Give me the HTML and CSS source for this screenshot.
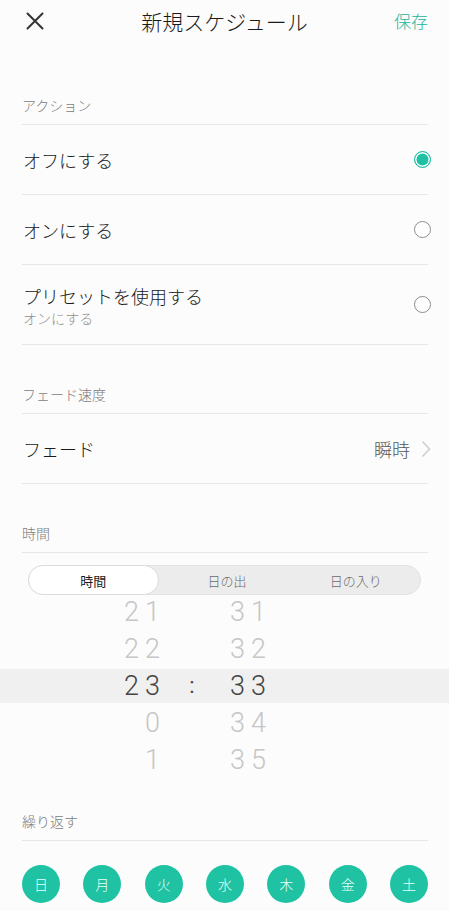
FILE: index.html
```html
<!DOCTYPE html>
<html lang="ja">
<head>
<meta charset="utf-8">
<link rel="stylesheet" href="styles.css">
</head>
<body>
<div class="page">
  <header class="topbar">
    <div class="tb-left">
      <svg class="close" width="18" height="18" viewBox="0 0 18 18"><path d="M1.5 1.5 L16.5 16.5 M16.5 1.5 L1.5 16.5" stroke="#333" stroke-width="2" stroke-linecap="round" fill="none"/></svg>
    </div>
    <div class="tb-title">新規スケジュール</div>
    <div class="tb-right">保存</div>
  </header>

  <div class="sec-head first"><span>アクション</span></div>
  <div class="row"><span class="row-text">オフにする</span><span class="radio on"></span></div>
  <div class="row"><span class="row-text">オンにする</span><span class="radio"></span></div>
  <div class="row tall">
    <div class="row-stack"><span class="row-text">プリセットを使用する</span><span class="row-sub">オンにする</span></div>
    <span class="radio"></span>
  </div>

  <div class="sec-head"><span>フェード速度</span></div>
  <div class="row">
    <span class="row-text">フェード</span>
    <span class="row-value">瞬時<svg class="chev" width="10" height="18" viewBox="0 0 10 18"><path d="M1.5 1.5 L8.5 9 L1.5 16.5" stroke="#cfcfcf" stroke-width="1.6" fill="none"/></svg></span>
  </div>

  <div class="sec-head"><span>時間</span></div>
  <div class="segment">
    <div class="seg-item active">時間</div>
    <div class="seg-item">日の出</div>
    <div class="seg-item">日の入り</div>
  </div>

  <div class="picker">
    <div class="p-row"><span class="p-h">21</span><span class="p-c"></span><span class="p-m">31</span></div>
    <div class="p-row"><span class="p-h">22</span><span class="p-c"></span><span class="p-m">32</span></div>
    <div class="p-row sel"><span class="p-h">23</span><span class="p-c">:</span><span class="p-m">33</span></div>
    <div class="p-row"><span class="p-h">0</span><span class="p-c"></span><span class="p-m">34</span></div>
    <div class="p-row"><span class="p-h">1</span><span class="p-c"></span><span class="p-m">35</span></div>
  </div>

  <div class="sec-head repeat"><span>繰り返す</span></div>
  <div class="days">
    <span class="day">日</span>
    <span class="day">月</span>
    <span class="day">火</span>
    <span class="day">水</span>
    <span class="day">木</span>
    <span class="day">金</span>
    <span class="day">土</span>
  </div>
</div>
</body>
</html>
```

FILE: styles.css
```css
* { box-sizing: border-box; }
html, body { margin: 0; padding: 0; }
body {
  background: #fcfcfc;
  font-family: "Noto Sans CJK JP", "Noto Sans", sans-serif;
  color: #222;
  width: 449px;
  height: 911px;
  overflow: hidden;
}
.page { width: 449px; }

.topbar {
  height: 41px;
  display: flex;
  align-items: center;
}
.tb-left { width: 70px; padding-left: 26px; display: flex; align-items: center; }
.tb-title { flex: 1; text-align: center; font-size: 21px; font-weight: 300; color: #1a1a1a; line-height: 40px; }
.tb-right { width: 70px; text-align: right; padding-right: 21px; font-size: 17px; font-weight: 300; color: #19b69b; line-height: 40px; }

.sec-head {
  margin: 0 21px 0 22px;
  height: 69px;
  padding-bottom: 9px;
  border-bottom: 1px solid #e6e6e6;
  display: flex;
  align-items: flex-end;
  font-size: 14px;
  font-weight: 300;
  line-height: 20px;
  color: #7c7c7c;
}
.sec-head.first { height: 84px; }
.sec-head.repeat { height: 63px; }

.row {
  margin: 0 21px 0 22px;
  height: 70px;
  border-bottom: 1px solid #e6e6e6;
  display: flex;
  align-items: center;
  justify-content: space-between;
}
.row.tall { height: 80px; }
.row-text { font-size: 18px; font-weight: 300; line-height: 24px; color: #1a1a1a; padding-left: 1px; }
.row-stack { display: flex; flex-direction: column; padding-top: 2px; }
.row-sub { font-size: 14px; font-weight: 300; line-height: 20px; color: #8f8f8f; padding-left: 1px; }

.radio {
  width: 17px; height: 17px;
  border-radius: 50%;
  border: 1px solid #8c8c8c;
  margin-right: -3px;
  background: #fff;
}
.radio.on {
  border: 1px solid #1fc1a3;
  background: #1fc1a3;
  box-shadow: inset 0 0 0 1.5px #fff;
}

.row-value {
  display: flex; align-items: center;
  font-size: 18px; font-weight: 300; color: #555;
  margin-right: -3px;
}
.chev { margin-left: 11px; }

.segment {
  margin: 12px 28px 0 28px;
  height: 30px;
  border-radius: 15px;
  background: #ececec;
  border: 1px solid #e2e2e2;
  display: flex;
  align-items: stretch;
}
.seg-item {
  flex: 1;
  display: flex; align-items: center; justify-content: center;
  font-size: 13px; font-weight: 300; color: #6a6a6a;
  border-radius: 15px;
}
.seg-item.active {
  background: #fff;
  color: #1a1a1a;
  font-weight: 400;
  border: 1px solid #dcdcdc;
  margin: -1px 4px -1px -1px;
}

.picker { margin-top: -2px; }
.p-row {
  height: 37px;
  display: flex;
  align-items: center;
  font-family: Roboto, "Liberation Sans", sans-serif;
  font-weight: 300;
  font-size: 27px;
  color: #c6c6c6;
  letter-spacing: 6px;
}
.p-row.sel {
  color: #444;
  background: #f0f0f0;
  background-clip: content-box;
  padding: 1.5px 0;
}
.p-h { width: 166px; text-align: right; }
.p-c { width: 52px; text-align: center; letter-spacing: 0; font-size: 22px; font-weight: 400; }
.p-m { padding-left: 12px; }

.days {
  margin: 24px 21px 0 22px;
  display: flex;
  justify-content: space-between;
}
.day {
  width: 38px; height: 38px;
  border-radius: 50%;
  background: #1fc2a3;
  color: #e8fff9;
  font-size: 14px;
  font-weight: 300;
  display: flex; align-items: center; justify-content: center;
}
```
